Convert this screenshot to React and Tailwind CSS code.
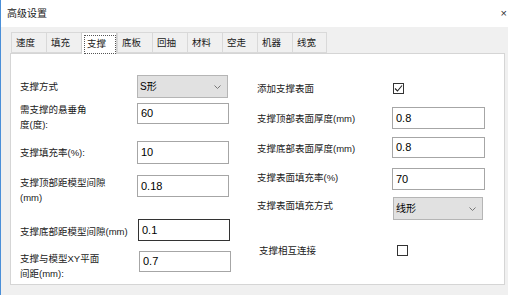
import React from "react";

const FONT = { fontFamily: '"Liberation Sans", "Noto Sans CJK SC", sans-serif' };

function Input({ value, w = "w-[92px]", h = "h-[22px]", dark = false }) {
  return (
    <div
      className={`${w} ${h} bg-white border ${dark ? "border-[#333333]" : "border-[#a6a6a6]"} flex items-center pl-[3px] text-[11px] text-black leading-none`}
    >
      {value}
    </div>
  );
}

function Select({ value, w = "w-[91px]" }) {
  return (
    <div className={`${w} h-[23px] bg-[#e1e1e1] border border-[#b5b5b5] flex items-center justify-between pl-[2px] pr-[6px] text-[10px] text-black leading-none`}>
      <span>{value}</span>
      <svg width="7" height="4" viewBox="0 0 7 4" className="text-[#777]">
        <path d="M0.5 0.5 L3.5 3.5 L6.5 0.5" fill="none" stroke="currentColor" strokeWidth="1" />
      </svg>
    </div>
  );
}

function Checkbox({ checked }) {
  return (
    <div className="w-[11px] h-[11px] bg-white border border-[#333333] flex items-center justify-center">
      {checked && (
        <svg width="9" height="9" viewBox="0 0 9 9">
          <path d="M1 4.5 L3.5 7 L8 1.5" fill="none" stroke="#222" strokeWidth="1.1" />
        </svg>
      )}
    </div>
  );
}

const tabs = ["速度", "填充", "支撑", "底板", "回抽", "材料", "空走", "机器", "线宽"];

export default function App() {
  return (
    <div
      className="w-[508px] h-[295px] bg-[#f0f0f0] border-l border-[#4a8fd8] overflow-hidden text-[#1a1a1a] relative"
      style={FONT}
    >
      {/* title bar */}
      <div className="h-[27px] bg-white flex items-center justify-between pl-[6px] pr-[1px]">
        <span className="text-[10px] leading-none">高级设置</span>
        <span className="text-[11px] leading-none text-[#333]">×</span>
      </div>

      {/* tabs */}
      <div className="h-[26px] flex items-end pl-[10px]">
        {tabs.map((t) =>
          t === "支撑" ? (
            <div
              key={t}
              className="w-[36px] h-[22px] bg-white border border-b-0 border-[#d0d0d0] flex items-center pl-[2px] pt-[1px] relative z-10 mb-[-1px]"
            >
              <span className="border border-dotted border-[#555] h-[19px] w-[32px] flex items-center pl-[2px] text-[9.5px] leading-none">
                {t}
              </span>
            </div>
          ) : (
            <div
              key={t}
              className="w-[35px] h-[21px] bg-[#f0f0f0] border border-r-0 border-[#d9d9d9] last:border-r flex items-center pl-[4px] text-[9.5px] leading-none"
            >
              {t}
            </div>
          )
        )}
      </div>

      {/* content */}
      <div className="ml-[9px] w-[495px] h-[232px] bg-white border border-[#d5d5d5] flex text-[9.5px] leading-[15px]">
        {/* left column */}
        <div className="w-[246px] pl-[9px] flex flex-col">
          <div className="mt-[21px] flex items-center h-[23px]">
            <div className="w-[117px]">支撑方式</div>
            <Select value="S形" w="w-[91px]" />
          </div>
          <div className="mt-[5px] flex items-start">
            <div className="w-[117px] mt-[-1px]">
              需支撑的悬垂角
              <br />
              度(度):
            </div>
            <Input value="60" h="h-[21px]" />
          </div>
          <div className="mt-[9px] flex items-center h-[23px]">
            <div className="w-[117px]">支撑填充率(%):</div>
            <Input value="10" h="h-[23px]" />
          </div>
          <div className="mt-[11px] flex items-start">
            <div className="w-[117px] mt-[0px]">
              支撑顶部距模型间隙
              <br />
              (mm)
            </div>
            <Input value="0.18" />
          </div>
          <div className="mt-[14px] flex items-center h-[22px]">
            <div className="w-[118px] pt-[2px]">支撑底部距模型间隙(mm)</div>
            <Input value="0.1" dark />
          </div>
          <div className="mt-[10px] flex items-start">
            <div className="w-[119px] mt-[0px]">
              支撑与模型XY平面
              <br />
              间距(mm):
            </div>
            <Input value="0.7" h="h-[21px]" />
          </div>
        </div>

        {/* right column */}
        <div className="flex-1 flex flex-col">
          <div className="mt-[26px] flex items-center h-[16px]">
            <div className="w-[136px]">添加支撑表面</div>
            <Checkbox checked />
          </div>
          <div className="mt-[11px] flex items-center h-[22px]">
            <div className="w-[135px]">支撑顶部表面厚度(mm)</div>
            <Input value="0.8" w="w-[93px]" />
          </div>
          <div className="mt-[8px] flex items-center h-[21px]">
            <div className="w-[135px] pt-[2px]">支撑底部表面厚度(mm)</div>
            <Input value="0.8" w="w-[93px]" h="h-[21px]" />
          </div>
          <div className="mt-[10px] flex items-center h-[22px]">
            <div className="w-[135px] mt-[-3px]">支撑表面填充率(%)</div>
            <Input value="70" w="w-[93px]" />
          </div>
          <div className="mt-[7px] flex items-center h-[23px]">
            <div className="w-[136px] mt-[-6px]">支撑表面填充方式</div>
            <Select value="线形" w="w-[90px]" />
          </div>
          <div className="mt-[23px] flex items-center h-[14px]">
            <div className="w-[140px] pl-[2px]">支撑相互连接</div>
            <Checkbox />
          </div>
        </div>
      </div>
    </div>
  );
}
